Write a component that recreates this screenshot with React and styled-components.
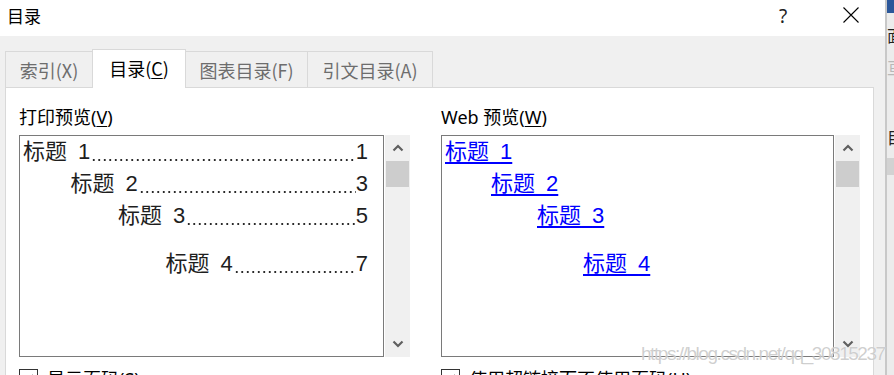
import React from "react";
import styled, { createGlobalStyle } from "styled-components";

const Global = createGlobalStyle`
  html, body { margin: 0; padding: 0; background: #fff; }
  body { font-family: "Noto Sans", "Noto Sans CJK SC", sans-serif; }
`;

const Screen = styled.div`
  position: relative;
  width: 894px;
  height: 375px;
  overflow: hidden;
  display: flex;
`;

const Dialog = styled.div`
  width: 885px;
  flex: none;
  display: flex;
  flex-direction: column;
`;

const TitleBar = styled.div`
  height: 36px;
  flex: none;
  background: #fff;
  display: flex;
  align-items: center;
  padding: 0 11px 0 7px;
`;

const Title = styled.span`
  flex: 1;
  font: 17px/1 "Noto Sans CJK SC", sans-serif;
  color: #000;
  margin-top: -6px;
`;

const HelpButton = styled.span`
  width: 46px;
  margin-right: 22px;
  text-align: center;
  font: 19px/1 "Noto Sans", sans-serif;
  color: #222;
  margin-top: -4px;
`;

const CloseButton = styled.span`
  width: 46px;
  display: flex;
  justify-content: center;
  margin-top: -6px;
`;

const Body = styled.div`
  flex: 1;
  background: #f0f0f0;
  padding: 13px 11px 0 5px;
  display: flex;
  flex-direction: column;
`;

const TabRow = styled.div`
  height: 38px;
  flex: none;
  display: flex;
  align-items: flex-end;
`;

const Tab = styled.div`
  box-sizing: border-box;
  width: ${(p) => p.$w}px;
  height: ${(p) => (p.$active ? 39 : 36)}px;
  margin-bottom: ${(p) => (p.$active ? -1 : 0)}px;
  & + & { margin-left: -1px; }
  position: relative;
  z-index: ${(p) => (p.$active ? 2 : 1)};
  background: ${(p) => (p.$active ? "#fff" : "#f0f0f0")};
  border: 1px solid #d9d9d9;
  border-bottom: none;
  display: flex;
  align-items: center;
  justify-content: center;
  padding-bottom: ${(p) => (p.$active ? 3 : 0)}px;
  font: 18px/1 "Noto Sans CJK SC", sans-serif;
  color: ${(p) => (p.$active ? "#000" : "#6d6d6d")};
`;

const Panel = styled.div`
  flex: 1;
  background: #fff;
  border: 1px solid #d9d9d9;
  border-bottom: none;
  padding: 0 13px 0 13px;
  display: flex;
  align-items: flex-start;
`;

const Column = styled.div`
  width: ${(p) => p.$w}px;
  flex: none;
  display: flex;
  flex-direction: column;
`;

const Divider = styled.div`
  width: 1px;
  align-self: stretch;
  background: #a8a8a8;
  margin: 17px 15px 0 16px;
`;

const SectionLabel = styled.div`
  margin-top: 19px;
  height: 20px;
  font: 18px/20px "Noto Sans", "Noto Sans CJK SC", sans-serif;
  color: #000;
  white-space: nowrap;
`;

const Key = styled.span`
  text-decoration: underline;
  text-underline-offset: 2px;
`;

const Preview = styled.div`
  margin-top: 8px;
  display: flex;
  gap: 1px;
  height: 222px;
`;

const ListBox = styled.div`
  box-sizing: border-box;
  width: ${(p) => p.$w}px;
  height: 222px;
  border: 1px solid #7a7a7a;
  padding: 0 15px 0 3px;
  overflow: hidden;
`;

const Entry = styled.div`
  display: flex;
  height: 32px;
  padding-left: ${(p) => p.$indent}px;
  margin-top: ${(p) => p.$gap || 0}px;
  font: 22px/32px "Liberation Sans", "Noto Sans CJK SC", sans-serif;
  color: #1e1e1e;
  white-space: nowrap;
`;

const Leader = styled.span`
  flex: 1;
  min-width: 0;
  background-image: radial-gradient(circle, #2a2a2a 0.9px, transparent 1.2px);
  background-size: 5.5px 4px;
  background-repeat: repeat-x;
  background-position: left 1px bottom 6.5px;
`;

const WebEntry = styled.div`
  height: 32px;
  padding-left: ${(p) => p.$indent}px;
  margin-top: ${(p) => p.$gap || 0}px;
  font: 22px/32px "Liberation Sans", "Noto Sans CJK SC", sans-serif;
  white-space: nowrap;
`;

const WebLink = styled.span`
  color: #0000ff;
  text-decoration: underline;
  text-underline-offset: 3px;
`;

const ScrollTrack = styled.div`
  width: 25px;
  height: 222px;
  background: #f0f0f0;
  display: flex;
  flex-direction: column;
`;

const ArrowCell = styled.div`
  height: 26px;
  flex: none;
  display: flex;
  align-items: center;
  justify-content: center;
`;

const Thumb = styled.div`
  height: 26px;
  margin: 0 1px;
  background: #cdcdcd;
`;

const Spacer = styled.div`
  flex: 1;
`;

const CheckRow = styled.div`
  margin-top: 12px;
  display: flex;
  align-items: flex-start;
  gap: 9px;
  font: 18px/20px "Noto Sans", "Noto Sans CJK SC", sans-serif;
  color: #000;
  white-space: nowrap;
`;

const CheckBox = styled.div`
  box-sizing: border-box;
  width: 19px;
  height: 19px;
  border: 1px solid #333;
  background: #fff;
  display: flex;
  justify-content: center;
  align-items: center;
`;

const Strip = styled.div`
  flex: 1;
  background: #ececec;
  border-left: 2px solid #c8c8c8;
  display: flex;
  flex-direction: column;
  overflow: hidden;
`;

const StripBlue = styled.div`
  height: 13px;
  background: #2b579a;
`;

const StripChar = styled.div`
  margin-top: ${(p) => p.$top}px;
  height: 16px;
  font: 16px/16px "Noto Sans CJK SC", sans-serif;
  color: ${(p) => p.$color};
  white-space: nowrap;
`;

const StripBar = styled.div`
  margin-top: ${(p) => p.$top}px;
  height: 17px;
  background: #d2d2d2;
`;

const Watermark = styled.div`
  position: absolute;
  left: 641px;
  top: 343px;
  font: 19px/22px "Liberation Sans", sans-serif;
  letter-spacing: -1.45px;
  color: rgba(175, 175, 175, 0.6);
  text-shadow: 0 0 1px rgba(255, 255, 255, 0.9);
  pointer-events: none;
  white-space: nowrap;
`;

const Chevron = ({ down }) => (
  <svg width="12" height="8" viewBox="0 0 12 8">
    <polyline
      points={down ? "1.5,1.5 6,6 10.5,1.5" : "1.5,6.5 6,2 10.5,6.5"}
      fill="none"
      stroke="#606060"
      strokeWidth="2.2"
    />
  </svg>
);

const Scrollbar = () => (
  <ScrollTrack>
    <ArrowCell><Chevron /></ArrowCell>
    <Thumb />
    <Spacer />
    <ArrowCell><Chevron down /></ArrowCell>
  </ScrollTrack>
);

const Check = () => (
  <svg width="13" height="13" viewBox="0 0 13 13">
    <polyline points="2,7 5,10 11,3" fill="none" stroke="#000" strokeWidth="1.4" />
  </svg>
);

const tabs = [
  { label: "索引(X)", w: 88 },
  { label: "目录(C)", w: 94, active: true },
  { label: "图表目录(F)", w: 123 },
  { label: "引文目录(A)", w: 126 },
];

const headings = [
  { n: 1, page: 1, gap: 0 },
  { n: 2, page: 3, gap: 0 },
  { n: 3, page: 5, gap: 0 },
  { n: 4, page: 7, gap: 16 },
];

export default function App() {
  return (
    <>
      <Global />
      <Screen>
        <Dialog>
          <TitleBar>
            <Title>目录</Title>
            <HelpButton>?</HelpButton>
            <CloseButton>
              <svg width="16" height="16" viewBox="0 0 16 16">
                <path d="M0.5 0.5 L15.5 15.5 M15.5 0.5 L0.5 15.5" stroke="#000" strokeWidth="1.1" />
              </svg>
            </CloseButton>
          </TitleBar>
          <Body>
            <TabRow>
              {tabs.map((t) => (
                <Tab key={t.label} $w={t.w} $active={t.active}>
                  {t.active ? <span>目录(<Key>C</Key>)</span> : t.label}
                </Tab>
              ))}
            </TabRow>
            <Panel>
              <Column $w={391}>
                <SectionLabel>打印预览(<Key>V</Key>)</SectionLabel>
                <Preview>
                  <ListBox $w={365}>
                    {headings.map((h) => (
                      <Entry key={h.n} $indent={(h.n - 1) * 47.5} $gap={h.gap}>
                        <span>标题{"\u2002"}{h.n}</span>
                        <Leader />
                        <span>{h.page}</span>
                      </Entry>
                    ))}
                  </ListBox>
                  <Scrollbar />
                </Preview>
                <CheckRow>
                  <CheckBox><Check /></CheckBox>
                  <span>显示页码(<Key>S</Key>)</span>
                </CheckRow>
              </Column>
              <Divider />
              <Column $w={419}>
                <SectionLabel>Web 预览(<Key>W</Key>)</SectionLabel>
                <Preview>
                  <ListBox $w={393}>
                    {headings.map((h) => (
                      <WebEntry key={h.n} $indent={(h.n - 1) * 46} $gap={h.gap}>
                        <WebLink>标题{"\u2002"}{h.n}</WebLink>
                      </WebEntry>
                    ))}
                  </ListBox>
                  <Scrollbar />
                </Preview>
                <CheckRow>
                  <CheckBox><Check /></CheckBox>
                  <span>使用超链接而不使用页码(<Key>H</Key>)</span>
                </CheckRow>
              </Column>
            </Panel>
          </Body>
        </Dialog>
        <Strip>
          <StripBlue />
          <StripChar $top={14} $color="#222">面</StripChar>
          <StripChar $top={16} $color="#b8b8b8">亘</StripChar>
          <StripChar $top={54} $color="#222">目</StripChar>
          <StripBar $top={13} />
        </Strip>
        <Watermark>https://blog.csdn.net/qq_30815237</Watermark>
      </Screen>
    </>
  );
}
